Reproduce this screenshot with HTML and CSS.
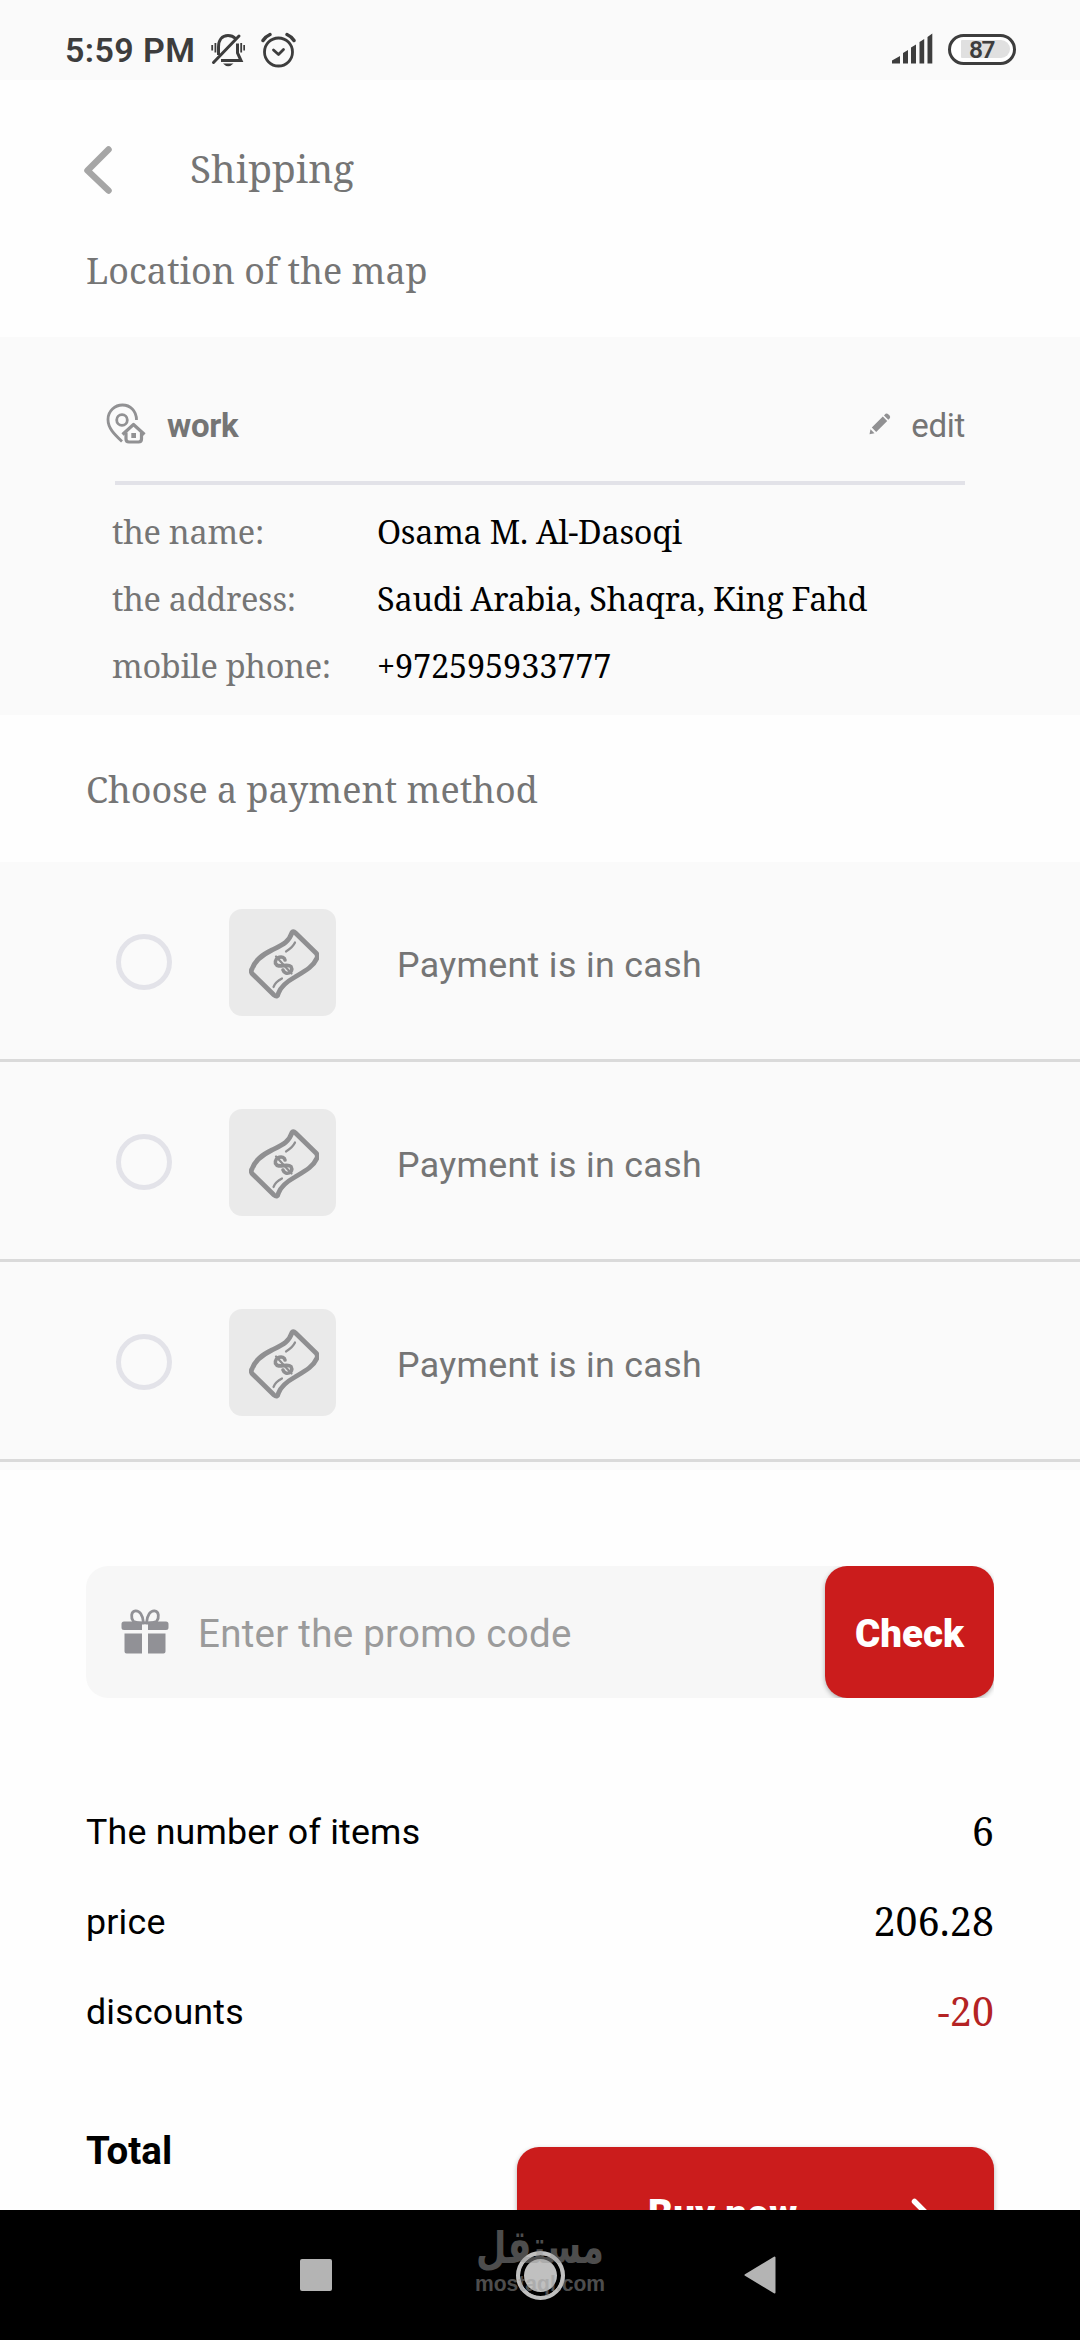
FILE: index.html
```html
<!DOCTYPE html>
<html lang="en">
<head>
<meta charset="utf-8">
<title>Shipping</title>
<link rel="stylesheet" href="styles.css">
</head>
<body>
<svg class="defs" aria-hidden="true">
  <symbol id="cash" viewBox="0 0 70 70">
    <g fill="none" stroke="#8f8f91" stroke-linecap="round" stroke-linejoin="round">
      <path stroke-width="4.800" d="M43 3.500 Q44.500 2 46.500 4 L67 24 Q69 26 68 29 C64 38 56 42 46 48 C38 52.500 32 57 29.500 64 Q28.500 69 25 66 L3 44.500 Q1.500 42 3 40 C6 31 13 26 23 21 C34 15.500 40 13 43 3.500Z"/>
      <path stroke-width="2.200" d="M46 13.500 C44 18 41 20 37 22.500 M24.500 58 C26 54 29 51.500 33 49.500"/>
      <path stroke-width="3.600" d="M36 31 C35 25.500 25 28 26.500 34.500 C29 40 38 34 42 37.500 C45.500 44 36 47 34 41"/>
      <path stroke-width="2.200" d="M27 27.500 L42.500 44.500"/>
    </g>
  </symbol>
</svg>
<main class="screen">
  <header class="status">
    <span class="time">5:59 PM</span>
    <svg class="bell" width="34" height="34" viewBox="0 0 34 34" fill="none" stroke="#3d3d3d" stroke-width="3">
      <path d="M7.500 22 V14 C7.500 7 11 2.500 17 2.500 C20 2.500 22.500 3.500 24.500 5.500 M26.500 10.500 V20 L30 27.500 H10"/>
      <path stroke-width="3" stroke-linecap="round" d="M2.500 29.500 L28 3"/>
      <path stroke-width="1.800" d="M1.200 12 V17.500 M4.400 10 V19.500 M30.200 10 V19.500 M33.200 12 V17.500"/>
      <path fill="#3d3d3d" stroke="none" d="M12 30.500 H22.500 Q17 36 12 30.500Z"/>
    </svg>
    <svg class="alarm" width="35" height="36" viewBox="0 0 35 36" fill="none" stroke="#3d3d3d" stroke-width="2.800" stroke-linecap="round" stroke-linejoin="round">
      <circle cx="17.500" cy="20" r="14"/>
      <path d="M12.500 18 L17.500 22.500 L22.500 17.500"/>
      <path stroke-width="3.400" d="M2 8.500 Q4.500 4.500 9 2.500 M33 8.500 Q30.500 4.500 26 2.500"/>
    </svg>
    <svg class="signal" width="41" height="31" viewBox="0 0 41 31" fill="#3d3d3d">
      <path d="M0 27.500 L8 23 V30.500 H0Z M11 20 L16 17 V30.500 H11Z M19 14.500 L24 11.500 V30.500 H19Z M27.500 9 L32.200 6 V30.500 H27.500Z M35.500 4 L40.300 0.500 V30.500 H35.500Z"/>
    </svg>
    <span class="battery"><span class="charge">87</span></span>
  </header>

  <header class="topbar">
    <svg width="30" height="50" viewBox="0 0 30 50" fill="none" stroke="#a6a6a6" stroke-width="6.500" stroke-linecap="round" stroke-linejoin="round"><path d="M25.500 4.500 L4.500 25.500 L25.500 45.500"/></svg>
    <h1 class="title">Shipping</h1>
  </header>
  <h2 class="location-heading">Location of the map</h2>

  <section class="address">
    <div class="address-head">
      <svg class="pin" width="40" height="42" viewBox="0 0 40 42" fill="none" stroke="#919193">
        <path stroke-width="2.800" d="M16 38.500 C8 31 2 25 2 16.500 C2 8 9 2 16.500 2 C24 2 30.500 7.500 30.500 17"/>
        <circle cx="16" cy="17" r="5.300" stroke-width="2.800"/>
        <path stroke-width="3.200" stroke-linejoin="round" d="M16.500 31.500 L27.500 21.500 L38.500 31.500"/>
        <path stroke-width="3.200" d="M20 29.500 V36 Q20 39 23 39 H32.500 Q35.500 39 35.500 36 V29.500"/>
        <path fill="#919193" stroke="none" d="M25.300 30 H30 V35 H25.300Z"/>
      </svg>
      <strong class="place">work</strong>
      <svg class="pencil" width="22" height="22" viewBox="0 0 22 22" fill="#919193">
        <path d="M0.500 21.300 L1.500 16.200 L5.500 20.200Z M2.800 14.600 L13.800 3.600 L18.200 8 L7.200 19Z M15 2.400 L16.600 0.800 Q18 0 19.500 1.500 L20.600 2.600 Q21.700 4 20.800 5.300 L19.300 6.800Z"/>
      </svg>
      <span class="edit">edit</span>
    </div>
    <dl class="details">
      <dt>the name:</dt><dd>Osama M. Al-Dasoqi</dd>
      <dt>the address:</dt><dd>Saudi Arabia, Shaqra, King Fahd</dd>
      <dt>mobile phone:</dt><dd class="phone">+972595933777</dd>
    </dl>
  </section>

  <h2 class="payment-heading">Choose a payment method</h2>
  <section class="methods">
    <div class="method"><span class="radio"></span><span class="tile"><svg width="70" height="70"><use href="#cash"/></svg></span><span class="method-name">Payment is in cash</span></div>
    <div class="method"><span class="radio"></span><span class="tile"><svg width="70" height="70"><use href="#cash"/></svg></span><span class="method-name">Payment is in cash</span></div>
    <div class="method"><span class="radio"></span><span class="tile"><svg width="70" height="70"><use href="#cash"/></svg></span><span class="method-name">Payment is in cash</span></div>
  </section>

  <section class="promo">
    <svg class="gift" width="48" height="45" viewBox="0 0 48 45" fill="#919196">
      <path d="M3 12.500 H45 Q47.500 12.500 47.500 15 V18.500 Q47.500 21 45 21 H27 V15 H21 V21 H3 Q0.500 21 0.500 18.500 V15 Q0.500 12.500 3 12.500Z M3.500 24.500 H21 V44.500 H5.500 Q3.500 44.500 3.500 42.500Z M27 24.500 H44.500 V42.500 Q44.500 44.500 42.500 44.500 H27Z"/>
      <path fill="none" stroke="#919196" stroke-width="2.800" d="M22.500 14 C22 6 18.500 1.500 14.500 1.800 C10 2.300 9.500 8.500 12.500 12.500 Q17 14.500 22.500 14Z M25.500 14 C26 6 29.500 1.500 33.500 1.800 C38 2.300 38.500 8.500 35.500 12.500 Q31 14.500 25.500 14Z"/>
    </svg>
    <span class="placeholder">Enter the promo code</span>
    <button class="btn check">Check</button>
  </section>

  <section class="summary">
    <div class="line"><span>The number of items</span><span class="amount">6</span></div>
    <div class="line"><span>price</span><span class="amount">206.28</span></div>
    <div class="line"><span>discounts</span><span class="amount discount">-20</span></div>
  </section>
  <section class="checkout">
    <strong class="total">Total</strong>
    <button class="btn buy"><span>Buy now</span>
      <svg width="28" height="48" viewBox="0 0 28 48" fill="none" stroke="#fff" stroke-width="5.500" stroke-linecap="round" stroke-linejoin="round"><path d="M3.500 12.500 L15 24 L3.500 35.500"/></svg>
    </button>
  </section>
</main>
<nav class="navbar">
  <span class="nav-square"></span>
  <span class="nav-home"></span>
  <svg class="nav-back" width="32" height="38" viewBox="0 0 32 38" fill="#b4b4b4" stroke="#b4b4b4" stroke-width="2" stroke-linejoin="round"><path d="M1.500 19 L30.500 1.500 V36.500Z"/></svg>
  <svg class="watermark" width="134" height="70" viewBox="0 0 134 70" fill="#9a9a9a">
    <text class="wm-ar" transform="translate(67 33) scale(1 1.300)" text-anchor="middle" textLength="128" lengthAdjust="spacingAndGlyphs">مستقل</text>
    <text class="wm-en" x="2" y="61" textLength="130" lengthAdjust="spacingAndGlyphs">mostaql.com</text>
  </svg>
</nav>
</body>
</html>
```
FILE: styles.css
```css
* { box-sizing: border-box; margin: 0; padding: 0; }

body {
  width: 1080px;
  height: 2340px;
  overflow: hidden;
  background: #fefefe;
  color: #000;
  font-family: Roboto, sans-serif;
  font-size: 35.75px;
}

svg { flex: none; display: block; }
.defs { position: absolute; width: 0; height: 0; }
.screen { height: 2210px; overflow: hidden; }

/* status bar */
.status {
  height: 80px;
  padding: 20px 64px 0 65px;
  display: flex;
  align-items: center;
  background: #fafafa;
  color: #3d3d3d;
}
.time { font-size: 34px; font-weight: 600; letter-spacing: 0.4px; width: 146px; white-space: nowrap; }
.alarm { margin-left: 16px; }
.signal { margin-left: auto; margin-top: -3px; }
.battery {
  width: 68px;
  height: 31px;
  margin: -2px 0 0 15px;
  padding: 3.5px 3px 3.5px 10px;
  border: 3px solid #3d3d3d;
  border-radius: 16px;
  background: #fff;
}
.charge {
  display: block;
  width: 49px;
  height: 18px;
  border-radius: 1px 9px 9px 1px;
  background: #e0e0e0;
  font-size: 24.5px;
  font-weight: 600;
  line-height: 19px;
  text-indent: 8px;
  letter-spacing: -1.5px;
}

/* header */
.topbar { height: 176px; padding-left: 83px; display: flex; align-items: center; }
.topbar svg { margin-top: 4px; }
.title { margin-left: 77px; font: 400 38.8px "Noto Serif", serif; color: #757575; }
h2 { padding-left: 86px; font: 400 35.9px "Noto Serif", serif; color: #757575; }
.location-heading { height: 81px; line-height: 30px; }
.payment-heading { height: 147px; line-height: 149px; }

/* address */
.address { height: 378px; background: #fafafa; }
.address-head {
  height: 148px;
  margin: 0 115px;
  padding-top: 32px;
  border-bottom: 4px solid #e2e2e8;
  display: flex;
  align-items: center;
  font-size: 33px;
  letter-spacing: -0.3px;
  color: #757575;
}
.pin { margin: -3px 0 0 -9px; }
.place { margin-left: 21px; }
.pencil { margin: -3px 20px 0 auto; }
.details {
  margin: 13px 112px 0;
  display: grid;
  grid-template-columns: 265px 1fr;
  grid-auto-rows: 67px;
  font: 32.5px/67px "Noto Serif", serif;
  letter-spacing: -0.3px;
}
.details dt { color: #757575; }
.details .phone { letter-spacing: -0.15px; }

/* payment methods */
.methods { height: 608px; background: #fafafa; }
.method {
  height: 200px;
  padding: 4px 0 0 116px;
  border-bottom: 3px solid #dadada;
  display: flex;
  align-items: center;
}
.radio { width: 56px; height: 56px; border: 5px solid #e3e3e9; border-radius: 50%; margin-top: -2px; }
.tile {
  width: 107px;
  height: 107px;
  margin: 0 61px 0 57px;
  padding: 2px 0 0 3px;
  border-radius: 13px;
  background: #eaeaea;
  display: grid;
  place-items: center;
}
.method-name { color: #757575; margin-top: 4px; letter-spacing: 0.35px; }

/* promo code */
.promo {
  height: 132px;
  margin: 96px 86px 0;
  padding-left: 35px;
  border-radius: 22px;
  background: #f7f7f7;
  clip-path: inset(0);
  display: flex;
  align-items: center;
}
.gift { margin-top: -2px; }
.placeholder { margin: 3px 0 0 29px; font-size: 38.5px; letter-spacing: 0.27px; color: #9b9b9b; }
.btn {
  height: 132px;
  border: 0;
  border-radius: 22px;
  background: #cb1c1c;
  color: #fff;
  font: 900 38.5px Roboto, sans-serif;
  box-shadow: 0 2px 5px rgba(0, 0, 0, .3);
}
.check { width: 169px; margin-left: auto; padding-top: 3px; }

/* totals */
.summary { margin: 89px 86px 0; }
.line { height: 90px; display: flex; justify-content: space-between; line-height: 90px; letter-spacing: 0.2px; }
.amount { font: 39.2px/88px "Noto Serif", serif; }
.discount { color: #b42324; }
.checkout { margin: 71px 86px 0; display: flex; justify-content: space-between; }
.total { font-size: 38.5px; line-height: 45px; }
.buy { width: 477px; margin-top: 19px; padding: 0 55px 0 131px; display: flex; align-items: center; justify-content: space-between; letter-spacing: 0.3px; }

/* system navigation */
.navbar { position: relative; height: 130px; padding-left: 300px; display: flex; align-items: center; background: #000; }
.nav-square { width: 32px; height: 32px; border-radius: 2px; background: #b4b4b4; }
.nav-home {
  width: 49px;
  height: 49px;
  margin: 0 179px 0 184px;
  border: 4px solid #c0c0c0;
  border-radius: 50%;
  background: #c0c0c0;
  box-shadow: inset 0 0 0 4px #000;
}
.watermark { position: absolute; left: 473px; top: 20px; opacity: .5; }
.wm-ar { font: bold 36px "DejaVu Sans", sans-serif; }
.wm-en { font: bold 22px "Liberation Sans", sans-serif; }
```
